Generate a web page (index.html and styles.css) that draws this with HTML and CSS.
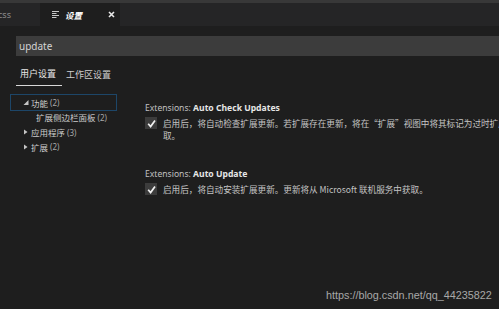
FILE: index.html
```html
<!DOCTYPE html>
<html lang="zh-CN">
<head>
<meta charset="utf-8">
<link rel="stylesheet" href="styles.css">
</head>
<body>
<div class="window">
  <div class="tabbar">
    <div class="tab inactive"><span class="tab-label">css</span></div>
    <div class="tab active">
      <svg class="tab-icon" width="7" height="7" viewBox="0 0 7 7"><path d="M0 0.5H7M0 2.5H4.5M0 4.5H7M0 6.5H4.5" stroke="#c8c8c8" stroke-width="1"/></svg>
      <span class="tab-label">设置</span>
      <svg class="tab-close" width="7" height="7" viewBox="0 0 7 7"><path d="M1 1L6 6M6 1L1 6" stroke="#e8e8e8" stroke-width="1.6"/></svg>
    </div>
  </div>
  <div class="editor">
    <div class="search">update</div>
    <div class="scopes">
      <div class="scope selected">用户设置</div>
      <div class="scope">工作区设置</div>
    </div>
    <div class="body">
      <div class="tree">
        <div class="row focused">
          <svg class="twisty" width="5" height="5" viewBox="0 0 5 5"><polygon points="0,5 5,5 5,0" fill="#c5c5c5"/></svg>
          <span class="name">功能</span><span class="count">(2)</span>
        </div>
        <div class="row child">
          <span class="name">扩展侧边栏面板</span><span class="count">(2)</span>
        </div>
        <div class="row">
          <svg class="twisty" width="5" height="6" viewBox="0 0 5 6"><polygon points="0.5,0.5 4,3 0.5,5.5" fill="#c5c5c5"/></svg>
          <span class="name">应用程序</span><span class="count">(3)</span>
        </div>
        <div class="row">
          <svg class="twisty" width="5" height="6" viewBox="0 0 5 6"><polygon points="0.5,0.5 4,3 0.5,5.5" fill="#c5c5c5"/></svg>
          <span class="name">扩展</span><span class="count">(2)</span>
        </div>
      </div>
      <div class="settings">
        <div class="setting">
          <div class="label">Extensions: <b>Auto Check Updates</b></div>
          <div class="value">
            <span class="check"><svg width="11" height="11" viewBox="0 0 11 11"><path d="M2.2 5.8L4.6 8.6L9 2.4" fill="none" stroke="#f0f0f0" stroke-width="1.7"/></svg></span>
            <div class="desc">启用后，将自动检查扩展更新。若扩展存在更新，将在“扩展”视图中将其标记为过时扩展。更新将从 Microsoft 联机服务中获<br>取。</div>
          </div>
        </div>
        <div class="setting">
          <div class="label">Extensions: <b>Auto Update</b></div>
          <div class="value">
            <span class="check"><svg width="11" height="11" viewBox="0 0 11 11"><path d="M2.2 5.8L4.6 8.6L9 2.4" fill="none" stroke="#f0f0f0" stroke-width="1.7"/></svg></span>
            <div class="desc">启用后，将自动安装扩展更新。更新将从 Microsoft 联机服务中获取。</div>
          </div>
        </div>
      </div>
    </div>
  </div>
  <div class="watermark">https://blog.csdn.net/qq_44235822</div>
</div>
</body>
</html>
```

FILE: styles.css
```css
html, body {
  margin: 0;
  padding: 0;
  background: #1e1e1e;
}
body {
  width: 499px;
  height: 309px;
  overflow: hidden;
  font-family: "Noto Sans", "Noto Sans CJK SC", sans-serif;
  color: #cccccc;
}
.window {
  position: relative;
  width: 499px;
  height: 309px;
  overflow: hidden;
}
.tabbar {
  display: flex;
  height: 23px;
  background: #252526;
  border-top: 3px solid #383838;
}
.tab {
  display: flex;
  align-items: center;
  height: 23px;
  font-size: 9px;
}
.tab.inactive {
  width: 40px;
  color: #8b8b8b;
}
.tab.inactive .tab-label {
  margin-left: -2px;
}
.tab.active {
  width: 80px;
  background: #1e1e1e;
  padding-left: 12px;
  box-sizing: border-box;
  color: #ffffff;
}
.tab-icon {
  margin-right: 6px;
}
.tab.active .tab-label {
  font-family: "Noto Sans CJK SC", sans-serif;
  font-style: italic;
  font-weight: bold;
  font-size: 8.5px;
}
.tab-close {
  margin-left: auto;
  margin-right: 5px;
}
.editor {
  padding-top: 10px;
}
.search {
  margin-left: 16px;
  height: 20px;
  line-height: 20px;
  background: #3c3c3c;
  color: #d4d4d4;
  font-size: 10px;
  padding-left: 3px;
}
.scopes {
  display: flex;
  margin-left: 16px;
  height: 30px;
  align-items: flex-end;
  gap: 2px;
}
.scope {
  font-family: "Noto Sans CJK SC", sans-serif;
  font-size: 9px;
  color: #cfcfcf;
  padding: 0 2px 5px;
  line-height: 12px;
}
.scope.selected {
  color: #e8e8e8;
  padding: 0 6px 5px 4px;
  border-bottom: 1px solid #d8d8d8;
}
.body {
  display: flex;
  padding-top: 8px;
}
.tree {
  margin-left: 10px;
  width: 107px;
  flex: none;
}
.row {
  display: flex;
  align-items: center;
  height: 14.7px;
  font-size: 8.5px;
  padding-left: 10px;
  box-sizing: border-box;
  border: 1px solid transparent;
}
.row.focused {
  height: 17px;
  border-color: #1d4668;
  margin-bottom: -1px;
}
.row.child {
  padding-left: 25px;
}
.twisty {
  width: 10px;
  flex: none;
}
.name {
  font-family: "Noto Sans CJK SC", sans-serif;
  color: #cccccc;
  margin-right: 2px;
}
.count {
  color: #a8a8a8;
  font-size: 8px;
}
.settings {
  margin-left: 28px;
  padding-top: 8px;
}
.setting {
  margin-bottom: 27px;
}
.label {
  font-size: 8.6px;
  color: #c0c0c0;
  line-height: 13px;
  white-space: nowrap;
}
.label b {
  color: #e6e6e6;
}
.value {
  display: flex;
  align-items: flex-start;
  margin-top: 2px;
}
.check {
  display: flex;
  align-items: center;
  justify-content: center;
  width: 12px;
  height: 12px;
  background: #3c3c3c;
  flex: none;
}
.desc {
  margin-left: 6px;
  font-family: "Noto Sans CJK SC", sans-serif;
  font-size: 8.6px;
  line-height: 12px;
  color: #c4c4c4;
  white-space: nowrap;
}
.watermark {
  position: absolute;
  left: 326px;
  top: 289px;
  font-family: "Liberation Sans", Arial, sans-serif;
  font-size: 10.8px;
  color: #a8a8a8;
  line-height: 13px;
}
```
